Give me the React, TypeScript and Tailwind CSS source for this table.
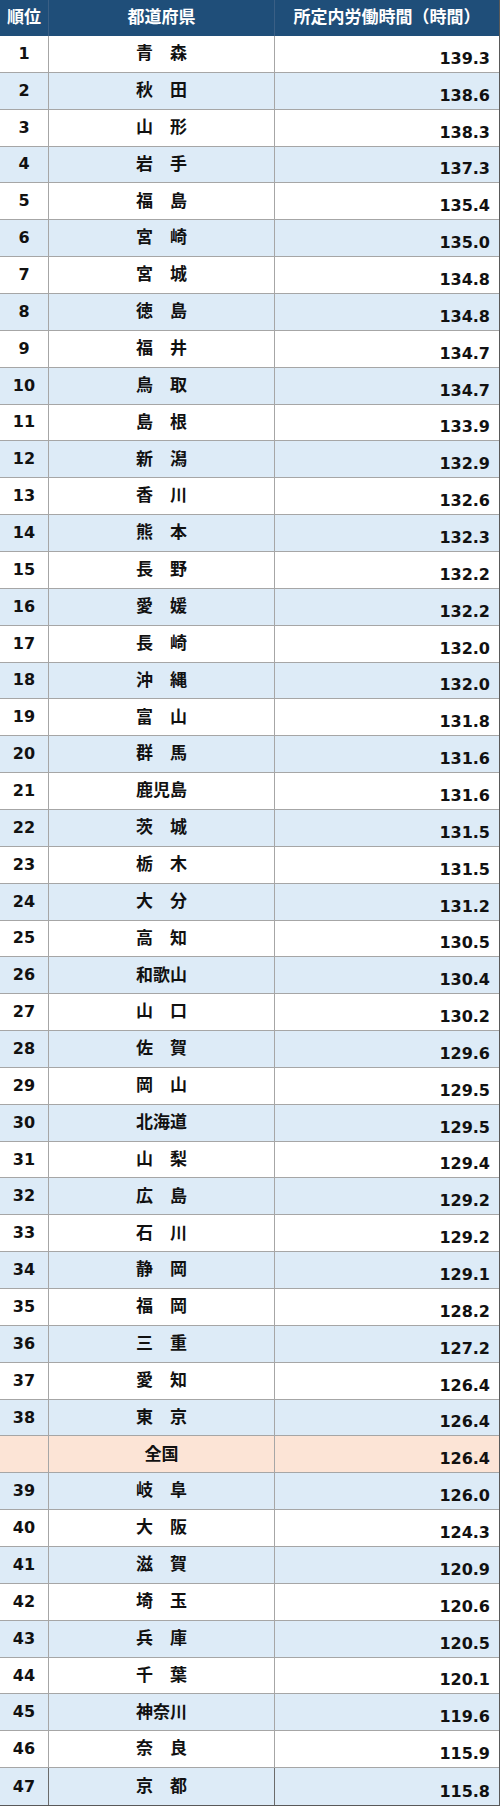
import React from 'react';

const rows: [string, string, string][] = [
  ['1', '青　森', '139.3'],
  ['2', '秋　田', '138.6'],
  ['3', '山　形', '138.3'],
  ['4', '岩　手', '137.3'],
  ['5', '福　島', '135.4'],
  ['6', '宮　崎', '135.0'],
  ['7', '宮　城', '134.8'],
  ['8', '徳　島', '134.8'],
  ['9', '福　井', '134.7'],
  ['10', '鳥　取', '134.7'],
  ['11', '島　根', '133.9'],
  ['12', '新　潟', '132.9'],
  ['13', '香　川', '132.6'],
  ['14', '熊　本', '132.3'],
  ['15', '長　野', '132.2'],
  ['16', '愛　媛', '132.2'],
  ['17', '長　崎', '132.0'],
  ['18', '沖　縄', '132.0'],
  ['19', '富　山', '131.8'],
  ['20', '群　馬', '131.6'],
  ['21', '鹿児島', '131.6'],
  ['22', '茨　城', '131.5'],
  ['23', '栃　木', '131.5'],
  ['24', '大　分', '131.2'],
  ['25', '高　知', '130.5'],
  ['26', '和歌山', '130.4'],
  ['27', '山　口', '130.2'],
  ['28', '佐　賀', '129.6'],
  ['29', '岡　山', '129.5'],
  ['30', '北海道', '129.5'],
  ['31', '山　梨', '129.4'],
  ['32', '広　島', '129.2'],
  ['33', '石　川', '129.2'],
  ['34', '静　岡', '129.1'],
  ['35', '福　岡', '128.2'],
  ['36', '三　重', '127.2'],
  ['37', '愛　知', '126.4'],
  ['38', '東　京', '126.4'],
  ['', '全国', '126.4'],
  ['39', '岐　阜', '126.0'],
  ['40', '大　阪', '124.3'],
  ['41', '滋　賀', '120.9'],
  ['42', '埼　玉', '120.6'],
  ['43', '兵　庫', '120.5'],
  ['44', '千　葉', '120.1'],
  ['45', '神奈川', '119.6'],
  ['46', '奈　良', '115.9'],
  ['47', '京　都', '115.8'],
];

const font = {
  fontFamily: '"DejaVu Sans", "Noto Sans CJK JP", sans-serif',
};

export default function App() {
  return (
    <div
      className="grid h-[1806px] w-[500px] grid-cols-[49px_226px_1fr] grid-rows-[36px_repeat(48,minmax(0,1fr))] border-r border-b border-[#595959] bg-white text-[16px] font-bold text-[#111]"
      style={font}
    >
      <div className="flex items-center justify-center border-r border-[#3a5f85] bg-[#1f4e79] text-[17px] text-white">順位</div>
      <div className="flex items-center justify-center border-r border-[#3a5f85] bg-[#1f4e79] text-[17px] text-white">都道府県</div>
      <div className="flex items-center justify-center bg-[#1f4e79] text-[17px] text-white">所定内労働時間（時間）</div>

      {rows.map(([rank, name, value], i) => {
        const bg = rank === '' ? 'bg-[#fce4d6]' : i % 2 === 1 ? 'bg-[#ddebf7]' : 'bg-white';
        const edge = i === rows.length - 1 ? '' : 'border-b border-[#a6a6a6]';
        return (
          <React.Fragment key={i}>
            <div className={`flex items-center justify-center border-r border-[#6b6b6b] ${edge} ${bg}`}>{rank}</div>
            <div className={`flex items-center justify-center whitespace-pre border-r border-[#6b6b6b] text-[17px] ${edge} ${bg}`}>{name}</div>
            <div className={`flex items-end justify-end pr-[9px] pb-[3px] leading-5 ${edge} ${bg}`}>{value}</div>
          </React.Fragment>
        );
      })}
    </div>
  );
}
